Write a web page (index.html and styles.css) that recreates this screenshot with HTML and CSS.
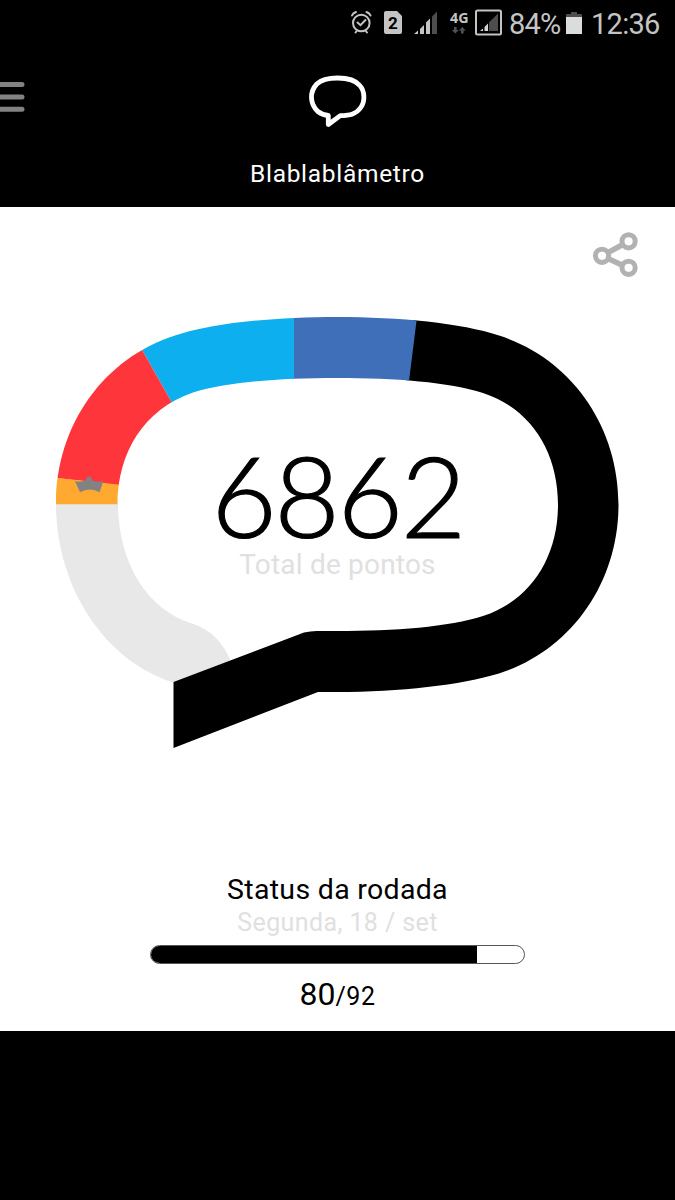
FILE: index.html
```html
<!DOCTYPE html>
<html lang="pt-BR">
<head>
<meta charset="utf-8">
<title>Blablablâmetro</title>
<link rel="stylesheet" href="styles.css">
</head>
<body>
<div class="statusbar">
  <svg class="status-icons" width="165" height="46" viewBox="340 0 165 46">
    <g fill="none" stroke="#c4c4c4" stroke-width="2" stroke-linecap="round">
      <circle cx="361.3" cy="23" r="8.3"/>
      <path d="M352 15.5Q353 13 356 12M366.500 12Q369.500 13 370.500 15.500M357 30.500L355.500 32.500M365.500 30.500L367 32.500M357.500 22.500L360.500 25.200L365.500 20"/>
    </g>
    <path fill="#c4c4c4" d="M386 11H397L402 16V32Q402 34 400 34H386Q384 34 384 32V13Q384 11 386 11Z"/>
    <text class="sim" x="393" y="29.300" text-anchor="middle">2</text>
    <g fill="#c4c4c4">
      <path d="M414 34L418 30.500V34ZM420 29L424 25V34H420ZM426 22.500L430 18.500V34H426Z"/>
      <path fill="#4d4d4d" d="M432 16.500L437 11.500V34H432Z"/>
    </g>
    <text class="network" x="450" y="22.500" textLength="18.500" lengthAdjust="spacingAndGlyphs">4G</text>
    <path fill="#515151" d="M454 27h2.600v3h2.200l-3.500 3.500-3.500-3.500h2.200zM461 33.500h2.600v-3h2.200L462.300 27l-3.500 3.500h2.200z"/>
    <rect x="476" y="10.500" width="25" height="24" rx="1.500" fill="none" stroke="#c4c4c4" stroke-width="2"/>
    <path fill="#4d4d4d" d="M489 22.500L498 13.500V31H489Z"/>
    <path fill="#d5d5d5" d="M480 31L483 28.500V31ZM484.500 27L488 23.500V31H484.500Z"/>
  </svg>
  <span class="percent">84%</span>
  <svg class="battery" width="16" height="24" viewBox="0 0 16 24">
    <path fill="#4d4d4d" d="M5 0h6v2h4q1 0 1 1v3H0V3q0-1 1-1h4z"/>
    <path fill="#dcdcdc" d="M0 5H16V22H0Z"/>
  </svg>
  <span class="clock">12:36</span>
</div>

<header class="header">
  <svg class="menu" width="26" height="32" viewBox="0 0 26 32">
    <path d="M-4 3.500H22M-4 16H22M-4 28.300H22" stroke="#828282" stroke-width="5" stroke-linecap="round"/>
  </svg>
  <svg class="logo" width="62" height="56" viewBox="306.700 73 62 56">
    <path d="M337.500 78C326 78 320.500 80 316.500 84C309 92 309.500 104 317.500 111.500Q322 115 328 115.500V124.500L340 115.600C350 115.500 356 114 360.500 107.500C365 101 364.500 91 359.500 85.500C355 80 348 78 337.500 78Z" fill="none" stroke="#fff" stroke-width="4.800" stroke-linejoin="round"/>
  </svg>
  <h1 class="title">Blablablâmetro</h1>
</header>

<main class="panel">
  <svg class="share" width="46" height="46" viewBox="592 232 46 46">
    <g fill="none" stroke="#b2b2b2">
      <path stroke-width="5.500" d="M628.500 241.500L602 255.800L628.500 268"/>
      <g fill="#fff" stroke-width="5">
        <circle cx="628.600" cy="241.300" r="6.600"/><circle cx="602" cy="255.800" r="6.600"/><circle cx="628.600" cy="267.800" r="6.600"/>
      </g>
    </g>
  </svg>

  <section class="meter">
    <svg class="ring" width="575" height="440" viewBox="50 312 575 440">
      <defs>
        <clipPath id="band">
          <path d="M56 505V504C56 425 104 358 175 335.500C213 323 274 317 337 317C400 317 461 323 499 335.500C570 358 618.500 425 618.500 504.500C618.500 584 570 651 499 673.500C461 685 400 692 337 692H318L173.500 748V682L304 632.500Q312 630.500 320 631H337C395 631 449 627 483 616C532 600 558 556 558 504.500C558 453 532 409 483 393C449 382 395 378 337 378C279 378 227 382 193 392.500C144 409 117.500 453 117.500 504V505Z"/>
        </clipPath>
      </defs>
      <path fill="#e8e8e8" d="M56 503C56 587 104 660 173 682.500L230.500 661C224 643 210 629 192 623.500C145 609 118 560 118 503Z"/>
      <g clip-path="url(#band)">
        <path fill="#000" d="M415 300H640V760H160V600H380V620Z"/>
        <path fill="#406fb9" d="M293 300H419.100L405 413H293Z"/>
        <path fill="#0dafee" d="M113.800 300H294V420H181.700Z"/>
        <path fill="#ff353c" d="M40 300H113.800L181.700 420L150 489L40 476Z"/>
        <path fill="#ffa931" d="M40 476L150 488V504.300H40Z"/>
      </g>
      <path fill="#828282" d="M75 481Q80 482.500 85.500 480.500Q87 476 89.300 476.500Q91 476.500 92.500 480.500Q98 482.500 103.300 481L99.500 492.300Q90 486.500 80 492.300Z"/>
    </svg>
    <div class="score">
      <div class="points">6862</div>
      <div class="points-label">Total de pontos</div>
    </div>
  </section>

  <section class="round">
    <h2 class="round-title">Status da rodada</h2>
    <div class="round-date">Segunda, 18 / set</div>
    <div class="progress"><div class="progress-fill"></div></div>
    <div class="count">80<span class="count-total">/92</span></div>
  </section>
</main>
</body>
</html>
```

FILE: styles.css
```css
* { box-sizing: border-box; }
body {
  margin: 0;
  height: 1200px;
  background: #000;
  font-family: Roboto, "Liberation Sans", sans-serif;
  overflow: hidden;
}
.statusbar {
  display: flex;
  height: 46px;
  padding-left: 340px;
  color: #c4c4c4;
  font-size: 29px;
  line-height: 48px;
  white-space: nowrap;
}
.status-icons { flex: none; }
.sim { font: bold 17px Roboto, sans-serif; fill: #000; }
.network { font: bold 14px "Noto Sans", sans-serif; fill: #c4c4c4; }
.percent { width: 61px; padding-left: 4px; letter-spacing: -0.8px; }
.battery { flex: none; margin-top: 12px; }
.clock { padding-left: 9px; letter-spacing: -0.7px; }

.header {
  display: grid;
  grid-template-columns: 26px 1fr 26px;
  grid-template-rows: 85px 76px;
  height: 161px;
}
.menu { margin-top: 35px; }
.logo { justify-self: center; margin-top: 27px; }
.title {
  grid-column: 1 / -1;
  margin: 0;
  padding-top: 29px;
  color: #fff;
  font-size: 24.5px;
  font-weight: 400;
  line-height: 28px;
  letter-spacing: 0.7px;
  text-align: center;
}

.panel {
  display: flex;
  flex-direction: column;
  height: 824px;
  padding-top: 25px;
  background: #fff;
}
.share { flex: none; align-self: flex-end; margin-right: 37px; }
.meter {
  display: grid;
  justify-items: center;
  width: 575px;
  height: 440px;
  margin: 34px 0 0 50px;
}
.ring, .score { grid-area: 1 / 1; }
.score {
  padding-top: 125px;
  text-align: center;
}
.points {
  font-family: Lato, sans-serif;
  font-size: 113px;
  font-weight: 300;
  line-height: 114px;
  letter-spacing: -2.4px;
  -webkit-text-stroke: 1.2px #000;
}
.points-label {
  color: #e0e0e0;
  font-size: 28px;
  line-height: 28px;
  letter-spacing: 0.2px;
}
.round {
  display: flex;
  flex-direction: column;
  align-items: center;
  margin-top: 121px;
}
.round-title {
  margin: 0;
  font-size: 28.5px;
  font-weight: 400;
  line-height: 34px;
  letter-spacing: 0.3px;
}
.round-date {
  color: #e0e0e0;
  font-size: 25px;
  line-height: 32px;
  letter-spacing: 0.4px;
}
.progress {
  width: 375px;
  height: 19px;
  margin-top: 6px;
  border: 1px solid #555;
  border-radius: 10px;
  overflow: hidden;
}
.progress-fill { width: 326px; height: 17px; background: #000; }
.count {
  margin-top: 11px;
  font-size: 32px;
  line-height: 38px;
}
.count-total { font-size: 25px; letter-spacing: 0.6px; }
```
